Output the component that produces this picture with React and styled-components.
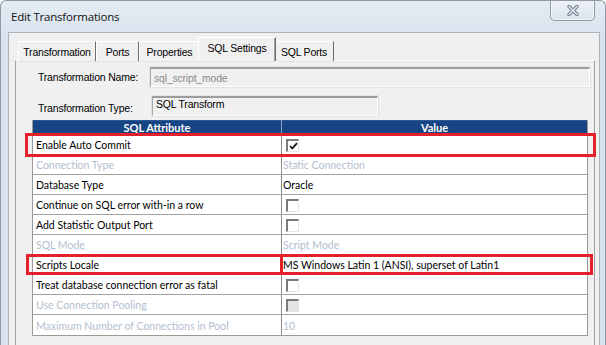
import React from "react"
import styled, { createGlobalStyle, css } from "styled-components"

const GlobalStyle = createGlobalStyle`
  html, body {
    margin: 0;
    padding: 0;
    background: #ffffff;
    overflow: hidden;
  }
`

const Window = styled.div`
  width: 606px;
  height: 345px;
  box-sizing: border-box;
  display: flex;
  flex-direction: column;
  background: linear-gradient(#e4ebf3, #d8e2ed 40px, #d8e2ed);
  border: 1px solid #8f9aa7;
  border-bottom: none;
  border-radius: 6px 6px 0 0;
  overflow: hidden;
`

const TitleBar = styled.div`
  height: 31px;
  flex: none;
  display: flex;
  align-items: flex-start;
  justify-content: space-between;
  padding-left: 10px;
  font-family: "Open Sans", "Liberation Sans", sans-serif;
  font-size: 11.5px;
  color: #111;

  span {
    line-height: 31px;
    letter-spacing: -0.2px;
  }
`

const CloseButton = styled.div`
  width: 45px;
  height: 21px;
  margin-right: 10px;
  margin-top: -1px;
  display: flex;
  align-items: center;
  justify-content: center;
  box-sizing: border-box;
  border: 1px solid #8e99a6;
  border-top: none;
  border-radius: 0 0 5px 5px;
  background: linear-gradient(#eef2f7, #dbe3ec);
  box-shadow: inset 0 0 0 1px rgba(255, 255, 255, 0.7);
`

const Client = styled.div`
  flex: 1;
  margin: 0 5px 0 7px;
  background: #f0f0f0;
  border: 1px solid #a9b4bf;
  border-bottom: none;
  padding: 5px 4px 0 6px;
  display: flex;
  flex-direction: column;
`

const TabStrip = styled.div`
  height: 23px;
  display: flex;
  align-items: flex-end;
  padding-left: 3px;
  position: relative;
  z-index: 1;
  margin-bottom: -1px;
`

const Tab = styled.div`
  width: ${(p) => p.$w}px;
  height: 20px;
  box-sizing: border-box;
  display: flex;
  align-items: center;
  justify-content: center;
  font-family: "Liberation Sans", Arial, sans-serif;
  font-size: 10.5px;
  letter-spacing: -0.2px;
  color: #000;
  background: #f0f0f0;
  border-top: 1px solid #ffffff;
  border-left: 1px solid #ffffff;
  border-right: 1px solid #6e6e6e;
  ${(p) =>
    p.$active &&
    css`
      height: 24px;
      margin: 0 -2px;
      padding-bottom: 3px;
      box-shadow: inset -1px 0 0 #a0a0a0;
      position: relative;
      z-index: 2;
    `}
`

const Panel = styled.div`
  flex: 1;
  border: 1px solid #a0a0a0;
  border-top-color: #ffffff;
  border-bottom: none;
  box-shadow: inset 0 1px 0 #e3e3e3;
  padding: 6px 0 0 0;
  display: flex;
  flex-direction: column;
`

const FormRow = styled.div`
  display: flex;
  align-items: center;
  height: 20px;
  margin-bottom: ${(p) => p.$gap || 0}px;
  padding-left: 22px;
`

const Label = styled.div`
  width: ${(p) => p.$w}px;
  flex: none;
  font-family: "Liberation Sans", Arial, sans-serif;
  font-size: 10.5px;
  letter-spacing: -0.2px;
  color: #000;
  padding-top: ${(p) => p.$drop || 0}px;
`

const Field = styled.div`
  height: 20px;
  box-sizing: border-box;
  width: ${(p) => (p.$w ? `${p.$w}px` : "auto")};
  flex: ${(p) => (p.$w ? "none" : 1)};
  margin-right: ${(p) => (p.$w ? 0 : 4)}px;
  border-top: 2px solid #9d9d9d;
  border-left: 1px solid #a8a8a8;
  border-right: 1px solid #ffffff;
  border-bottom: 1px solid #ffffff;
  box-shadow: 0 0 0 1px #e2e2e2;
  background: #f0f0f0;
  font-family: "Liberation Sans", Arial, sans-serif;
  font-size: 10.5px;
  letter-spacing: -0.2px;
  color: ${(p) => (p.$muted ? "#8c8c8c" : "#000")};
  padding: ${(p) => (p.$top ? "0 3px" : "2px 3px")};
  line-height: ${(p) => (p.$top ? "13px" : "14px")};
`

const Grid = styled.div`
  margin: 4px 6px 0 16px;
  background: #ffffff;
  border-left: 1px solid #9a9a9a;
  border-right: 1px solid #9a9a9a;
  border-bottom: 1px solid #9a9a9a;
  font-family: Lato, "Open Sans", sans-serif;
  font-size: 10.5px;
`

const HeaderRow = styled.div`
  display: grid;
  grid-template-columns: 249px 1fr;
  height: 15px;
  background: #174482;
  color: #ffffff;
  font-weight: 700;
  font-size: 11px;
  box-shadow: inset 0 1px 0 #2c5896;

  div {
    display: flex;
    align-items: center;
    justify-content: center;
    line-height: 15px;
  }

  div:first-child {
    border-right: 1px solid #8da3c2;
  }
`

const Row = styled.div`
  position: relative;
  display: grid;
  grid-template-columns: 249px 1fr;
  height: 20px;
  box-sizing: border-box;
  border-bottom: 1px solid #a2a2a2;

  &:last-child {
    border-bottom: none;
  }
`

const Cell = styled.div`
  display: flex;
  align-items: center;
  padding-left: ${(p) => (p.$value ? 1 : 3)}px;
  padding-top: 1px;
  color: ${(p) => (p.$disabled ? "#b3c0cf" : "#000")};
  white-space: nowrap;
  overflow: hidden;

  &:first-child {
    border-right: 1px solid #8c8c8c;
  }
`

const Check = styled.div`
  width: 13px;
  height: 13px;
  margin-left: 3px;
  box-sizing: border-box;
  border-top: 2px solid #7a7a7a;
  border-left: 2px solid #7a7a7a;
  border-right: 1px solid #e6e6e6;
  border-bottom: 1px solid #e6e6e6;
  background: ${(p) => (p.$disabled ? "#e4e4e4" : "#ffffff")};
  display: flex;
  align-items: center;
  justify-content: center;
`

const Highlight = styled.div`
  position: absolute;
  top: ${(p) => p.$t}px;
  bottom: ${(p) => p.$b}px;
  left: ${(p) => p.$l}px;
  right: ${(p) => p.$r}px;
  border: 3px solid #e3202b;
  pointer-events: none;
  z-index: 3;
`

const Divider = styled.div`
  position: absolute;
  top: -1px;
  bottom: -1px;
  left: 247px;
  width: 3px;
  background: #e3202b;
  z-index: 3;
`

const rows = [
  { name: "Enable Auto Commit", check: true, checked: true, mark: "auto" },
  { name: "Connection Type", value: "Static Connection", disabled: true },
  { name: "Database Type", value: "Oracle" },
  { name: "Continue on SQL error with-in a row", check: true },
  { name: "Add Statistic Output Port", check: true },
  { name: "SQL Mode", value: "Script Mode", disabled: true },
  { name: "Scripts Locale", value: "MS Windows Latin 1 (ANSI), superset of Latin1", mark: "locale" },
  { name: "Treat database connection error as fatal", check: true },
  { name: "Use Connection Pooling", check: true, disabled: true },
  { name: "Maximum Number of Connections in Pool", value: "10", disabled: true },
]

const tabs = [
  { label: "Transformation", w: 78 },
  { label: "Ports", w: 43 },
  { label: "Properties", w: 61 },
  { label: "SQL Settings", w: 78, active: true },
  { label: "SQL Ports", w: 60 },
]

const CloseGlyph = () => (
  <svg width="14" height="11" viewBox="0 0 14 11">
    <path d="M3 1.5 L11 9.5 M11 1.5 L3 9.5" stroke="#717d8c" strokeWidth="3.4" strokeLinecap="round" />
    <path d="M3 1.5 L11 9.5 M11 1.5 L3 9.5" stroke="#eef2f6" strokeWidth="1.3" strokeLinecap="round" />
  </svg>
)

const Tick = () => (
  <svg width="9" height="8" viewBox="0 0 9 8">
    <path d="M1 4 L3.3 6.5 L8 1.2" fill="none" stroke="#111" strokeWidth="1.8" />
  </svg>
)

const App = () => (
  <>
    <GlobalStyle />
    <Window>
      <TitleBar>
        <span>Edit Transformations</span>
        <CloseButton>
          <CloseGlyph />
        </CloseButton>
      </TitleBar>

      <Client>
        {/* Tabs */}
        <TabStrip>
          {tabs.map((t) => (
            <Tab key={t.label} $w={t.w} $active={t.active}>
              {t.label}
            </Tab>
          ))}
        </TabStrip>

        <Panel>
          <FormRow $gap={9}>
            <Label $w={112}>Transformation Name:</Label>
            <Field $muted>sql_script_mode</Field>
          </FormRow>
          <FormRow>
            <Label $w={114} $drop={3}>Transformation Type:</Label>
            <Field $w={226} $top>SQL Transform</Field>
          </FormRow>

          {/* Attribute grid */}
          <Grid>
            <HeaderRow>
              <div>SQL Attribute</div>
              <div>Value</div>
            </HeaderRow>
            {rows.map((r) => (
              <Row key={r.name}>
                <Cell $disabled={r.disabled}>{r.name}</Cell>
                <Cell $value $disabled={r.disabled}>
                  {r.check ? (
                    <Check $disabled={r.disabled}>{r.checked && <Tick />}</Check>
                  ) : (
                    r.value
                  )}
                </Cell>
                {r.mark === "auto" && <Highlight $t={-2} $b={-3} $l={-8} $r={-9} />}
                {r.mark === "locale" && (
                  <>
                    <Highlight $t={-1} $b={-1} $l={-7} $r={-6} />
                    <Divider />
                  </>
                )}
              </Row>
            ))}
          </Grid>
        </Panel>
      </Client>
    </Window>
  </>
)

export default App
